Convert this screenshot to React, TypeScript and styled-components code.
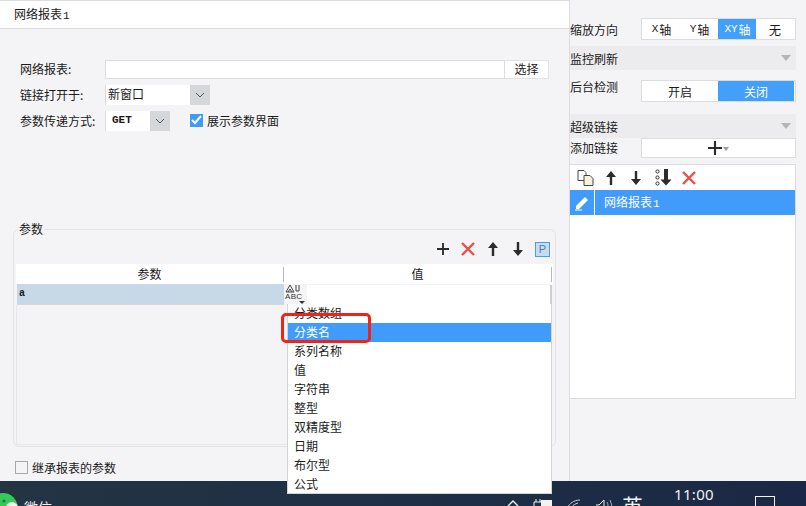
import styled, { createGlobalStyle } from 'styled-components';

const GlobalStyle = createGlobalStyle`
  html, body {
    margin: 0;
    padding: 0;
    background: #f4f4f6;
  }
  body {
    font-family: "Noto Sans CJK SC", "Liberation Sans", sans-serif;
    font-size: 12px;
    color: #1a1a1a;
  }
`;

const Stage = styled.div`
  position: relative;
  width: 806px;
  height: 506px;
  overflow: hidden;
  display: flex;
  flex-direction: column;
`;

const Main = styled.div`
  display: flex;
  height: 481px;
  flex: none;
`;

const LeftPanel = styled.div`
  width: 569px;
  flex: none;
  border-right: 1px solid #dcdcdf;
  display: flex;
  flex-direction: column;
`;

const Header = styled.div`
  height: 27px;
  flex: none;
  box-sizing: content-box;
  background: #fff;
  border-top: 1px solid #dcdcdf;
  border-bottom: 1px solid #dcdcdf;
  padding-left: 14px;
  line-height: 25px;
`;

const Latin = styled.span`
  font-family: "Liberation Mono", monospace;
  font-size: 11px;
  margin: 0 1px;
`;

const Form = styled.div`
  height: 103px;
  padding: 31px 0 0 20px;
  flex: none;
`;

const FormRow = styled.div<{ $h: number; $gap: number }>`
  display: flex;
  align-items: center;
  height: ${p => p.$h}px;
  margin-bottom: ${p => p.$gap}px;
`;

const Label = styled.div`
  width: 85px;
  flex: none;
  white-space: nowrap;
  padding-bottom: 2px;
`;

const TextInput = styled.div`
  width: 400px;
  height: 19px;
  box-sizing: border-box;
  background: #fff;
  border: 1px solid #dcdcdf;
`;

const PickButton = styled.div`
  width: 44px;
  height: 19px;
  box-sizing: border-box;
  background: #fff;
  border: 1px solid #e2e2e5;
  border-left: 0;
  text-align: center;
  line-height: 15px;
`;

const Select = styled.div<{ $w: number }>`
  width: ${p => p.$w}px;
  height: 20px;
  display: flex;
  background: #fff;
  border-left: 1px solid #dcdcdf;
  box-sizing: border-box;
  padding-left: 2px;
  line-height: 18px;
`;

const SelectValue = styled.div`
  flex: 1;
`;

const MonoValue = styled(SelectValue)`
  font-family: "Liberation Mono", monospace;
  font-size: 11px;
  font-weight: 700;
  padding-left: 4px;
`;

const SelectArrow = styled.div`
  width: 20px;
  background: #d6d7db;
  display: flex;
  align-items: center;
  justify-content: center;
`;

const CheckWrap = styled.div`
  display: flex;
  align-items: center;
  gap: 4px;
  margin: 0 0 2px 20px;
`;

const CheckedBox = styled.div`
  width: 13px;
  height: 13px;
  background: #3f9bf6;
  display: flex;
  align-items: center;
  justify-content: center;
`;

const ParamGroup = styled.div`
  position: relative;
  margin: 66px 0 0 13px;
  width: 543px;
  height: 218px;
  flex: none;
  box-sizing: border-box;
  border: 1px solid #e4e4e8;
  border-radius: 6px;
  padding: 9px 2px 1px;
  display: flex;
  flex-direction: column;
`;

const Legend = styled.div`
  position: absolute;
  top: -9px;
  left: 4px;
  padding: 0 2px 0 1px;
  background: #f4f4f6;
  line-height: 16px;
`;

const ParamTools = styled.div`
  height: 20px;
  display: flex;
  align-items: center;
  justify-content: flex-end;
  gap: 9px;
  padding-right: 3px;
  flex: none;
`;

const IconBox = styled.div`
  width: 16px;
  height: 16px;
  display: flex;
  align-items: center;
  justify-content: center;
`;

const PBadge = styled.div`
  width: 15px;
  height: 15px;
  box-sizing: border-box;
  background: #c5dcf2;
  border: 1px solid #4d9ce8;
  color: #5d7d9a;
  font: 11px/13px "Liberation Sans", sans-serif;
  text-align: center;
`;

const TableHead = styled.div`
  display: grid;
  grid-template-columns: 268px 268px;
  height: 20px;
  margin-top: 5px;
  background: #fff;
  flex: none;
`;

const HeadCell = styled.div`
  text-align: center;
  border-right: 1px solid #b9b9b9;
  margin: 3px 0 2px;
  line-height: 13px;
`;

const TableRow = styled.div`
  display: flex;
  height: 21px;
  flex: none;
`;

const NameCell = styled.div`
  width: 267px;
  margin-left: 1px;
  background: #c7d9e7;
  border-bottom: 1px solid #d8d8d8;
  box-sizing: border-box;
  padding-left: 2px;
  font: 700 10px/20px "Liberation Mono", monospace;
`;

const TypeCell = styled.div`
  width: 23px;
  display: flex;
  flex-direction: column;
  align-items: flex-start;
  padding-left: 1px;
  box-sizing: border-box;
  background: #f4f4f6;
  font: 8px/8px "Liberation Sans", sans-serif;
  letter-spacing: 0.3px;
  color: #333;
`;

const TypeCaret = styled.div`
  width: 0;
  height: 0;
  align-self: flex-end;
  margin: 0 2px 0 0;
  border-left: 3px solid transparent;
  border-right: 3px solid transparent;
  border-top: 3px solid #333;
`;

const ValueCell = styled.div`
  width: 245px;
  height: 20px;
  margin-top: 1px;
  box-sizing: border-box;
  background: #fff;
  border-bottom: 1px solid #dadada;
  border-right: 2px solid #cfcfcf;
`;

const TableBody = styled.div`
  flex: 1;
  margin-right: 1px;
  border: 1px solid #e7e7ea;
  border-top: 0;
`;

const InheritRow = styled.div`
  display: flex;
  align-items: center;
  gap: 4px;
  margin: 13px 0 0 15px;
  height: 15px;
`;

const EmptyBox = styled.div`
  width: 13px;
  height: 13px;
  box-sizing: border-box;
  border: 1px solid #a8a8a8;
`;

const RightPanel = styled.div`
  flex: 1;
  padding-right: 10px;
  display: flex;
  flex-direction: column;
`;

const PropRow = styled.div<{ $top: number }>`
  display: flex;
  margin-top: ${p => p.$top}px;
`;

const PropLabel = styled.div<{ $pad?: number; $lh?: number }>`
  width: 71px;
  flex: none;
  padding-top: ${p => p.$pad ?? 0}px;
  line-height: ${p => p.$lh ?? 18}px;
`;

const Segments = styled.div<{ $cols: number; $h: number }>`
  flex: 1;
  height: ${p => p.$h}px;
  box-sizing: border-box;
  display: grid;
  grid-template-columns: repeat(${p => p.$cols}, ${p => (p.$cols === 4 ? 38 : 76)}px);
  background: #fff;
  border: 1px solid #dcdcdf;
  align-items: stretch;
`;

const Segment = styled.div<{ $on?: boolean }>`
  text-align: center;
  display: flex;
  align-items: center;
  justify-content: center;
  background: ${p => (p.$on ? '#42a0fb' : 'transparent')};
  color: ${p => (p.$on ? '#fff' : '#1a1a1a')};
`;

const Band = styled.div<{ $top: number }>`
  height: 24px;
  margin-top: ${p => p.$top}px;
  background: #ececee;
  display: flex;
  align-items: center;
  justify-content: space-between;
  padding-right: 5px;
  flex: none;
`;

const BandCaret = styled.div`
  width: 0;
  height: 0;
  border-left: 5px solid transparent;
  border-right: 5px solid transparent;
  border-top: 6px solid #b5b5b7;
`;

const AddButton = styled.div`
  flex: 1;
  height: 20px;
  box-sizing: border-box;
  background: #fff;
  border: 1px solid #dcdcdf;
  display: flex;
  align-items: center;
  justify-content: center;
  gap: 1px;
`;

const SmallCaret = styled.div`
  width: 0;
  height: 0;
  margin-top: 2px;
  border-left: 3px solid transparent;
  border-right: 3px solid transparent;
  border-top: 4px solid #999;
`;

const LinkList = styled.div`
  margin-top: 6px;
  height: 235px;
  box-sizing: border-box;
  background: #fff;
  border: 1px solid #dcdcdf;
  border-left: 0;
  display: flex;
  flex-direction: column;
`;

const LinkTools = styled.div`
  height: 25px;
  display: flex;
  align-items: center;
  padding-left: 7px;
  gap: 9px;
  flex: none;
`;

const MoveBottom = styled.div`
  margin-left: 2px;
  display: flex;
`;

const LinkRow = styled.div`
  height: 25px;
  display: flex;
  background: #409bfa;
  color: #fff;
  flex: none;
`;

const EditCell = styled.div`
  width: 24px;
  border-right: 1px solid #fff;
  display: flex;
  align-items: center;
  justify-content: center;
  flex: none;
`;

const LinkText = styled.div`
  padding-left: 9px;
  line-height: 24px;
`;

const Dropdown = styled.ul`
  position: absolute;
  left: 287px;
  top: 304px;
  width: 265px;
  height: 190px;
  box-sizing: border-box;
  margin: 0;
  padding: 0;
  list-style: none;
  background: #fff;
  border: 1px solid #d4d4d4;
  border-top: 0;
`;

const DropdownItem = styled.li<{ $on?: boolean }>`
  height: 19px;
  line-height: 17px;
  padding-left: 6px;
  background: ${p => (p.$on ? '#409bfa' : 'transparent')};
  color: ${p => (p.$on ? '#fff' : '#1a1a1a')};
`;

const RedMark = styled.div`
  position: absolute;
  left: 281px;
  top: 313px;
  width: 90px;
  height: 30px;
  box-sizing: border-box;
  border: 3px solid #f0231b;
  border-radius: 5px;
`;

const Taskbar = styled.div`
  flex: 1;
  position: relative;
  display: flex;
  background: linear-gradient(90deg, #233443 0%, #1f2f46 50%, #1a2845 100%);
  color: #f2f2f2;
  overflow: hidden;
`;

const WeChatApp = styled.div`
  display: flex;
  width: 507px;
  flex: none;
`;

const WeChatText = styled.div`
  margin: 16px 0 0 5px;
  font-size: 14px;
  line-height: 20px;
`;

const Tray = styled.div`
  display: flex;
  width: 115px;
  flex: none;
  padding-top: 18px;
  gap: 14px;
`;

const ImeText = styled.div`
  width: 26px;
  margin-top: 11px;
  font-size: 21px;
  line-height: 26px;
`;

const Clock = styled.div`
  margin-left: 6px;
  width: 80px;
  font: 15px/17px "Noto Sans", sans-serif;
  padding-top: 5px;
  text-align: center;
  letter-spacing: 0.3px;
`;

const NotifyBox = styled.div`
  width: 18px;
  height: 20px;
  margin: 15px 0 0 21px;
  border: 1px solid #f2f2f2;
`;

const Chevron = () => (
  <svg width="10" height="6" viewBox="0 0 10 6">
    <path d="M1 1l4 4 4-4" fill="none" stroke="#555" strokeWidth="1" />
  </svg>
);

const Plus = ({ size = 12 }: { size?: number }) => (
  <svg width={size} height={size} viewBox="0 0 13 13">
    <path d="M6.5 0v13M0 6.5h13" stroke="#2b2b2b" strokeWidth="2" />
  </svg>
);

const Cross = () => (
  <svg width="14" height="14" viewBox="0 0 14 14">
    <path d="M1 1l12 12M13 1L1 13" stroke="#ea4f48" strokeWidth="2.4" />
  </svg>
);

const ArrowUp = () => (
  <svg width="12" height="14" viewBox="0 0 12 14">
    <path d="M6 0l5 6H7.2v8H4.8V6H1z" fill="#2b2b2b" />
  </svg>
);

const ArrowDown = () => (
  <svg width="12" height="14" viewBox="0 0 12 14">
    <path d="M6 14l5-6H7.2V0H4.8v8H1z" fill="#2b2b2b" />
  </svg>
);

const BottomArrow = () => (
  <svg width="17" height="17" viewBox="0 0 17 17">
    <circle cx="2.5" cy="2.5" r="1.6" fill="none" stroke="#333" />
    <circle cx="2.5" cy="8.5" r="1.6" fill="none" stroke="#333" />
    <circle cx="2.5" cy="14.5" r="1.6" fill="none" stroke="#333" />
    <path d="M11 16.5l5.5-6H13V0H9v10.5H5.5z" fill="#2b2b2b" />
  </svg>
);

const CopyIcon = () => (
  <svg width="17" height="16" viewBox="0 0 17 16">
    <path d="M1 .5h6l2 2v8H1z" fill="#fff" stroke="#444" />
    <path d="M7 5.5h6l3 3v7H7z" fill="#fbf2dc" stroke="#444" />
  </svg>
);

const PenIcon = () => (
  <svg width="16" height="16" viewBox="0 0 16 16">
    <path d="M2 11L11 2l3 3-9 9H2z" fill="#fff" />
    <path d="M1 15h7" stroke="#fff" />
  </svg>
);

const TypeIcon = () => (
  <svg width="16" height="9" viewBox="0 0 16 9">
    <path d="M1 8l4-7 4 7zM3 8l2-3 2 3" fill="none" stroke="#444" />
    <path d="M11 1v6h3V1" fill="none" stroke="#444" />
  </svg>
);

const WeChatLogo = () => (
  <svg width="19" height="25" viewBox="0 0 19 25">
    <circle cx="3" cy="27" r="15" fill="#35c95a" />
    <circle cx="4" cy="20" r="1.6" fill="#14803a" />
    <circle cx="12" cy="27" r="6" fill="#f2f2f2" />
  </svg>
);

const TrayIcons = () => (
  <>
    <svg width="12" height="7" viewBox="0 0 12 7">
      <path d="M1 7l5-5 5 5" fill="none" stroke="#f2f2f2" strokeWidth="1.3" />
    </svg>
    <svg width="20" height="7" viewBox="0 0 20 7">
      <path d="M3 0v3M7 0v3M1 3h8v5H1z" fill="none" stroke="#f2f2f2" />
      <path d="M8 1h11v7H8z" fill="#f2f2f2" />
    </svg>
    <svg width="14" height="7" viewBox="0 0 14 7">
      <path d="M1 8C2 5 7 1 13 1M5 8c1-2 3-3 6-4" fill="none" stroke="#c9ced6" />
    </svg>
    <svg width="20" height="8" viewBox="0 0 20 8">
      <path d="M1 6h3l5-5v8" fill="none" stroke="#f2f2f2" />
      <path d="M12 3c1 2 1 3 1 6M15 1c1 3 2 5 2 8" fill="none" stroke="#a9afb9" />
    </svg>
  </>
);

const options = ['分类数组', '分类名', '系列名称', '值', '字符串', '整型', '双精度型', '日期', '布尔型', '公式'];

const App = () => {
  return (
    <Stage>
      <GlobalStyle />
      <Main>
        <LeftPanel>
          <Header>
            网络报表<Latin>1</Latin>
          </Header>
          <Form>
            <FormRow $h={19} $gap={6}>
              <Label>网络报表:</Label>
              <TextInput />
              <PickButton>选择</PickButton>
            </FormRow>
            <FormRow $h={20} $gap={6}>
              <Label>链接打开于:</Label>
              <Select $w={105}>
                <SelectValue>新窗口</SelectValue>
                <SelectArrow>
                  <Chevron />
                </SelectArrow>
              </Select>
            </FormRow>
            <FormRow $h={20} $gap={0}>
              <Label>参数传递方式:</Label>
              <Select $w={65}>
                <MonoValue>GET</MonoValue>
                <SelectArrow>
                  <Chevron />
                </SelectArrow>
              </Select>
              <CheckWrap>
                <CheckedBox>
                  <svg width="11" height="10" viewBox="0 0 11 10">
                    <path d="M1 5l3 3 6-7" fill="none" stroke="#fff" strokeWidth="2" />
                  </svg>
                </CheckedBox>
                展示参数界面
              </CheckWrap>
            </FormRow>
          </Form>
          <ParamGroup>
            <Legend>参数</Legend>
            <ParamTools>
              <IconBox>
                <Plus />
              </IconBox>
              <IconBox>
                <Cross />
              </IconBox>
              <IconBox>
                <ArrowUp />
              </IconBox>
              <IconBox>
                <ArrowDown />
              </IconBox>
              <PBadge>P</PBadge>
            </ParamTools>
            <TableHead>
              <HeadCell>参数</HeadCell>
              <HeadCell>值</HeadCell>
            </TableHead>
            <TableRow>
              <NameCell>a</NameCell>
              <TypeCell>
                <TypeIcon />
                <span>ABC</span>
                <TypeCaret />
              </TypeCell>
              <ValueCell />
            </TableRow>
            <TableBody />
          </ParamGroup>
          <InheritRow>
            <EmptyBox />
            继承报表的参数
          </InheritRow>
        </LeftPanel>
        <RightPanel>
          <PropRow $top={18}>
            <PropLabel $pad={3}>缩放方向</PropLabel>
            <Segments $cols={4} $h={22}>
              <Segment>
                <Latin>X</Latin>轴
              </Segment>
              <Segment>
                <Latin>Y</Latin>轴
              </Segment>
              <Segment $on>
                <Latin>XY</Latin>轴
              </Segment>
              <Segment>无</Segment>
            </Segments>
          </PropRow>
          <Band $top={6}>
            监控刷新
            <BandCaret />
          </Band>
          <PropRow $top={10}>
            <PropLabel $lh={14}>后台检测</PropLabel>
            <Segments $cols={2} $h={22}>
              <Segment>开启</Segment>
              <Segment $on>关闭</Segment>
            </Segments>
          </PropRow>
          <Band $top={12}>
            超级链接
            <BandCaret />
          </Band>
          <PropRow $top={0}>
            <PropLabel $pad={1}>添加链接</PropLabel>
            <AddButton>
              <Plus size={14} />
              <SmallCaret />
            </AddButton>
          </PropRow>
          <LinkList>
            <LinkTools>
              <CopyIcon />
              <IconBox>
                <ArrowUp />
              </IconBox>
              <IconBox>
                <ArrowDown />
              </IconBox>
              <MoveBottom>
                <BottomArrow />
              </MoveBottom>
              <IconBox>
                <Cross />
              </IconBox>
            </LinkTools>
            <LinkRow>
              <EditCell>
                <PenIcon />
              </EditCell>
              <LinkText>
                网络报表<Latin>1</Latin>
              </LinkText>
            </LinkRow>
          </LinkList>
        </RightPanel>
      </Main>
      <Taskbar>
        <WeChatApp>
          <WeChatLogo />
          <WeChatText>微信</WeChatText>
        </WeChatApp>
        <Tray>
          <TrayIcons />
        </Tray>
        <ImeText>英</ImeText>
        <Clock>11:00</Clock>
        <NotifyBox />
      </Taskbar>
      <Dropdown>
        {options.map(o => (
          <DropdownItem key={o} $on={o === '分类名'}>
            {o}
          </DropdownItem>
        ))}
      </Dropdown>
      <RedMark />
    </Stage>
  );
};

export default App;
